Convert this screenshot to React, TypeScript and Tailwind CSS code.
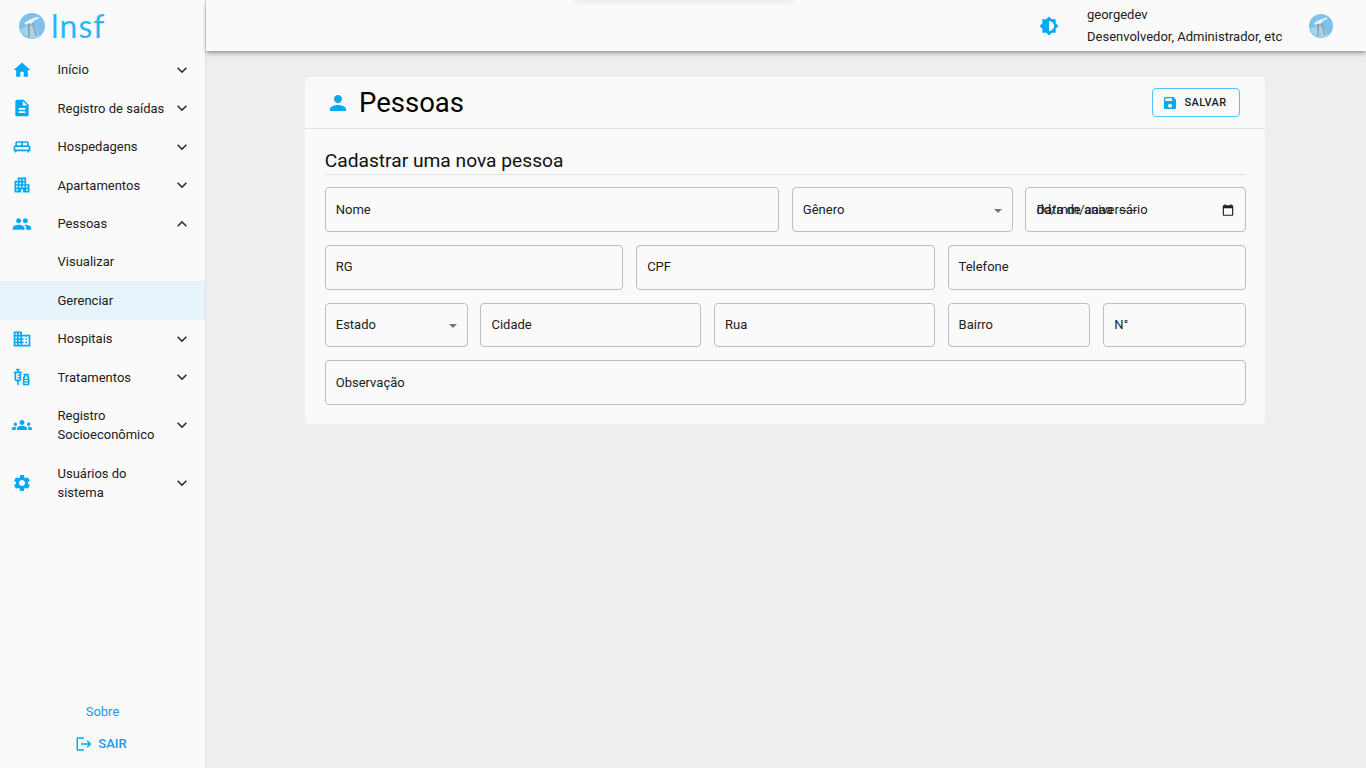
import { ReactNode } from "react";

const paths = {
  home: "M10 20v-6h4v6h5v-8h3L12 3 2 12h3v8z",
  doc: "M14 2H6c-1.1 0-1.99.9-1.99 2L4 20c0 1.1.89 2 1.99 2H18c1.1 0 2-.9 2-2V8l-6-6zm2 16H8v-2h8v2zm0-4H8v-2h8v2zm-3-5V3.5L18.5 9H13z",
  bed: "M22 12c0-1.1-.9-2-2-2V7c0-1.1-.9-2-2-2H6c-1.1 0-2 .9-2 2v3c-1.1 0-2 .9-2 2v5h1.33L4 19h1l.67-2h12.67l.66 2h1l.67-2H22v-5zm-4-2h-5V7h5v3zM6 7h5v3H6V7zm-2 5h16v3H4v-3z",
  apartment: "M17 11V3H7v4H3v14h8v-4h2v4h8V11h-4zM7 19H5v-2h2v2zm0-4H5v-2h2v2zm0-4H5V9h2v2zm4 4H9v-2h2v2zm0-4H9V9h2v2zm0-4H9V5h2v2zm4 8h-2v-2h2v2zm0-4h-2V9h2v2zm0-4h-2V5h2v2zm4 12h-2v-2h2v2zm0-4h-2v-2h2v2z",
  people: "M16 11c1.66 0 2.99-1.34 2.99-3S17.66 5 16 5c-1.66 0-3 1.34-3 3s1.34 3 3 3zm-8 0c1.66 0 2.99-1.34 2.99-3S9.66 5 8 5C6.34 5 5 6.34 5 8s1.34 3 3 3zm0 2c-2.33 0-7 1.17-7 3.5V19h14v-2.5c0-2.33-4.67-3.5-7-3.5zm8 0c-.29 0-.62.02-.97.05 1.16.84 1.97 1.97 1.97 3.45V19h6v-2.5c0-2.33-4.67-3.5-7-3.5z",
  domain: "M12 7V3H2v18h20V7H12zM6 19H4v-2h2v2zm0-4H4v-2h2v2zm0-4H4V9h2v2zm0-4H4V5h2v2zm4 12H8v-2h2v2zm0-4H8v-2h2v2zm0-4H8V9h2v2zm0-4H8V5h2v2zm10 12h-8v-2h2v-2h-2v-2h2v-2h-2V9h8v10zm-2-8h-2v2h2v-2zm0 4h-2v2h2v-2z",
  vaccines: "M11 5.5H8V4h.5c.55 0 1-.45 1-1s-.45-1-1-1h-3c-.55 0-1 .45-1 1s.45 1 1 1H6v1.5H3c-.55 0-1 .45-1 1s.45 1 1 1V15c0 1.1.9 2 2 2h1v4l2 1.5V17h1c1.1 0 2-.9 2-2V7.5c.55 0 1-.45 1-1s-.45-1-1-1zM9 9H7.25c-.41 0-.75.34-.75.75s.34.75.75.75H9V12H7.25c-.41 0-.75.34-.75.75s.34.75.75.75H9V15H5V7.5h4V9zm10.5 1.5V10c.55 0 1-.45 1-1s-.45-1-1-1h-5c-.55 0-1 .45-1 1s.45 1 1 1v.5c0 .5-1.5 1.16-1.5 3V20c0 1.1.9 2 2 2h4c1.1 0 2-.9 2-2v-6.5c0-1.84-1.5-2.5-1.5-3zm-3 0V10h1v.5c0 1.6 1.5 2 1.5 3v.5h-4v-.5c0-1 1.5-1.4 1.5-3zm2.5 5V17h-4v-1.5h4zM17 20h-2v-1.5h4V20h-2z",
  groups: "M12 12.75c1.63 0 3.07.39 4.24.9 1.08.48 1.76 1.56 1.76 2.73V18H6v-1.61c0-1.18.68-2.26 1.76-2.73 1.17-.52 2.61-.91 4.24-.91zM4 13c1.1 0 2-.9 2-2s-.9-2-2-2-2 .9-2 2 .9 2 2 2zm1.13 1.1c-.37-.06-.74-.1-1.13-.1-.99 0-1.93.21-2.78.58C.48 14.9 0 15.62 0 16.43V18h4.5v-1.61c0-.83.23-1.61.63-2.29zM20 13c1.1 0 2-.9 2-2s-.9-2-2-2-2 .9-2 2 .9 2 2 2zm4 3.43c0-.81-.48-1.53-1.22-1.85-.85-.37-1.79-.58-2.78-.58-.39 0-.76.04-1.13.1.4.68.63 1.46.63 2.29V18H24v-1.57zM12 6c1.66 0 3 1.34 3 3s-1.34 3-3 3-3-1.34-3-3 1.34-3 3-3z",
  settings: "M19.14 12.94c.04-.3.06-.61.06-.94 0-.32-.02-.64-.07-.94l2.03-1.58c.18-.14.23-.41.12-.61l-1.92-3.32c-.12-.22-.37-.29-.59-.22l-2.39.96c-.5-.38-1.03-.7-1.62-.94l-.36-2.54c-.04-.24-.24-.41-.48-.41h-3.84c-.24 0-.43.17-.47.41l-.36 2.54c-.59.24-1.13.57-1.62.94l-2.39-.96c-.22-.08-.47 0-.59.22L2.74 8.87c-.12.21-.08.47.12.61l2.03 1.58c-.05.3-.09.63-.09.94s.02.64.07.94l-2.03 1.58c-.18.14-.23.41-.12.61l1.92 3.32c.12.22.37.29.59.22l2.39-.96c.5.38 1.03.7 1.62.94l.36 2.54c.05.24.24.41.48.41h3.84c.24 0 .44-.17.47-.41l.36-2.54c.59-.24 1.13-.56 1.62-.94l2.39.96c.22.08.47 0 .59-.22l1.92-3.32c.12-.22.07-.47-.12-.61l-2.01-1.58zM12 15.6c-1.98 0-3.6-1.62-3.6-3.6s1.62-3.6 3.6-3.6 3.6 1.62 3.6 3.6-1.62 3.6-3.6 3.6z",
  brightness: "M20 15.31 23.31 12 20 8.69V4h-4.69L12 .69 8.69 4H4v4.69L.69 12 4 15.31V20h4.69L12 23.31 15.31 20H20v-4.69zM12 18V6c3.31 0 6 2.69 6 6s-2.69 6-6 6z",
  save: "M17 3H5c-1.11 0-2 .9-2 2v14c0 1.1.89 2 2 2h14c1.1 0 2-.9 2-2V7l-4-4zm-5 16c-1.66 0-3-1.34-3-3s1.34-3 3-3 3 1.34 3 3-1.34 3-3 3zm3-10H5V5h10v4z",
  person: "M12 12c2.21 0 4-1.79 4-4s-1.79-4-4-4-4 1.79-4 4 1.79 4 4 4zm0 2c-2.67 0-8 1.34-8 4v2h16v-2c0-2.66-5.33-4-8-4z",
  logout: "M17 7l-1.41 1.41L18.17 11H8v2h10.17l-2.58 2.58L17 17l5-5zM4 5h8V3H4c-1.1 0-2 .9-2 2v14c0 1.1.9 2 2 2h8v-2H4V5z",
  more: "M16.59 8.59 12 13.17 7.41 8.59 6 10l6 6 6-6z",
  less: "M12 8l-6 6 1.41 1.41L12 10.83l4.59 4.58L18 14z",
  calendar: "M19 4h-1V2h-2v2H8V2H6v2H5C3.9 4 3 4.9 3 6v14c0 1.1.9 2 2 2h14c1.1 0 2-.9 2-2V6c0-1.1-.9-2-2-2zm0 16H5V9h14v11z",
};

function Icon({ d, className }: { d: string; className: string }) {
  return (
    <svg viewBox="0 0 24 24" className={className} fill="currentColor" aria-hidden>
      <path d={d} />
    </svg>
  );
}

function Turbine({ size }: { size: number }) {
  return (
    <svg width={size} height={size} viewBox="0 0 24 24" aria-hidden className="shrink-0">
      <circle cx="12" cy="12" r="12" fill="#7fc1ea" />
      <path d="M1 15c3-1 6-3 9-3l5 1 4 9c-5 3-13 2-18-7z" fill="#a8d2ea" />
      <path d="M5 9.5C8 6.5 13 4.5 17.5 3.5l1 1.6C15 6 12 8 8.5 10.5 7 11 5.5 10.5 5 9.5z" fill="#eef2f4" />
      <path d="M8 10l.6 12.5h1.2L10 9.5zM13 7.5l3.6 13.3-1.2.6L11.6 8.4z" fill="#909ca4" />
      <path d="M10 9l3-2 .6 1-3 2z" fill="#ffffff" />
    </svg>
  );
}

type NavItem = { icon: string; label: ReactNode; open?: boolean };

const nav: NavItem[] = [
  { icon: paths.home, label: "Início" },
  { icon: paths.doc, label: "Registro de saídas" },
  { icon: paths.bed, label: "Hospedagens" },
  { icon: paths.apartment, label: "Apartamentos" },
  { icon: paths.people, label: "Pessoas", open: true },
];

const navAfter: NavItem[] = [
  { icon: paths.domain, label: "Hospitais" },
  { icon: paths.vaccines, label: "Tratamentos" },
  { icon: paths.groups, label: "Registro Socioeconômico" },
  { icon: paths.settings, label: "Usuários do sistema" },
];

function NavRow({ icon, label, open }: NavItem) {
  return (
    <div className="flex items-center pl-[12px] pr-[13px] py-[9.6px] text-[13px] leading-[19.2px] text-[#212121]">
      <Icon d={icon} className="-my-[1px] h-[20px] w-[20px] shrink-0 text-[#03a9f4]" />
      <span className="ml-[25.5px] w-[112px] shrink-0">{label}</span>
      <Icon d={open ? paths.less : paths.more} className="-my-[1px] ml-auto h-[20px] w-[20px] shrink-0 text-[#333333]" />
    </div>
  );
}

function SubRow({ label, active }: { label: string; active?: boolean }) {
  return (
    <div className={`py-[9.6px] pl-[57.5px] text-[13px] leading-[19.2px] text-[#212121] ${active ? "bg-[#e6f3fa]" : ""}`}>
      {label}
    </div>
  );
}

function Field({ label, span, arrow, children }: { label: string; span: string; arrow?: boolean; children?: ReactNode }) {
  return (
    <div className={`relative flex h-[44.67px] items-center rounded border border-[#bdbdbd] px-[10px] pb-[0.6px] text-[13px] text-[#212121] ${span}`}>
      <span>{label}</span>
      {arrow && (
        <span className="absolute right-[10px] top-1/2 h-0 w-0 -translate-y-[1px] border-x-[4.5px] border-t-[4px] border-x-transparent border-t-[#757575]" />
      )}
      {children}
    </div>
  );
}

export default function App() {
  return (
    <div className="flex h-[768px] w-full overflow-hidden bg-[#eeeeee] font-[Roboto,sans-serif]">
      <aside className="flex w-[206px] shrink-0 flex-col border-r border-[#e0e0e0] bg-[#fafafa]">
        <div className="flex h-[50.8px] shrink-0 items-center pl-[19px] pt-[1px]">
          <Turbine size={26} />
          <span className="ml-[6px] font-[Lato,sans-serif] text-[32px] font-normal leading-none tracking-[1px] text-[#29b6f6]">lnsf</span>
        </div>
        {nav.map((item, i) => (
          <NavRow key={i} {...item} />
        ))}
        <SubRow label="Visualizar" />
        <SubRow label="Gerenciar" active />
        {navAfter.map((item, i) => (
          <NavRow key={i} {...item} />
        ))}
        <div className="mt-auto flex flex-col items-center pb-[15px] text-[13px] text-[#2196f3]">
          <span className="leading-[19px]">Sobre</span>
          <div className="mr-[3px] mt-[13px] flex items-center gap-[5px] font-medium leading-[19px]">
            <Icon d={paths.logout} className="h-[18px] w-[18px] text-[#03a9f4]" />
            SAIR
          </div>
        </div>
      </aside>

      <div className="flex min-w-0 flex-1 flex-col">
        <header className="relative flex h-[51px] shrink-0 items-center bg-[#fafafa] shadow-[0_2px_4px_-1px_rgba(0,0,0,0.4),0_4px_5px_0_rgba(0,0,0,0.1)]">
          <div className="absolute -top-[6px] left-[368px] h-[6px] w-[220px] rounded shadow-[0_1px_6px_rgba(0,0,0,0.1)]" />
          <Icon d={paths.brightness} className="ml-[833px] h-[20px] w-[20px] text-[#03a9f4]" />
          <div className="ml-[28px] text-[13px] leading-[22px] text-[#212121]">
            <div>georgedev</div>
            <div>Desenvolvedor, Administrador, etc</div>
          </div>
          <div className="ml-[27px]">
            <Turbine size={24} />
          </div>
        </header>

        <main className="ml-[99px] mt-[26px] w-[960px] rounded bg-[#fafafa]">
          <div className="flex h-[52px] items-center border-b border-[#e0e0e0] pl-[21px] pr-[25px]">
            <Icon d={paths.person} className="h-[24px] w-[24px] text-[#03a9f4]" />
            <h1 className="ml-[9px] pt-[1px] text-[27.5px] font-normal leading-none text-black">Pessoas</h1>
            <button
              type="button"
              className="ml-auto flex h-[29px] w-[88px] items-center justify-center gap-[6px] rounded border border-[#4fc3f7] pr-[3px] pt-[1px] text-[11px] font-medium tracking-[0.4px] text-[#212121]"
            >
              <Icon d={paths.save} className="h-[16px] w-[16px] text-[#03a9f4]" />
              SALVAR
            </button>
          </div>
          <div className="pb-[19px] pl-[19.75px] pr-[18.85px] pt-[20px]">
            <h2 className="border-b border-[#e0e0e0] pb-[1px] text-[19.2px] font-normal leading-[24px] text-[#111111]">
              Cadastrar uma nova pessoa
            </h2>
            <div className="mt-[12.4px] grid grid-cols-12 gap-x-[12.8px] gap-y-[13px]">
              <Field label="Nome" span="col-span-6" />
              <Field label="Gênero" span="col-span-3" arrow />
              <Field label="Data de aniversário" span="col-span-3">
                <span className="absolute inset-y-0 left-[10px] flex items-center whitespace-pre pb-[0.6px]">dd/mm/aaaa  --:--</span>
                <Icon d={paths.calendar} className="absolute right-[10px] top-1/2 h-[14px] w-[14px] -translate-y-1/2 text-[#212121]" />
              </Field>
              <Field label="RG" span="col-span-4" />
              <Field label="CPF" span="col-span-4" />
              <Field label="Telefone" span="col-span-4" />
              <Field label="Estado" span="col-span-2" arrow />
              <Field label="Cidade" span="col-span-3" />
              <Field label="Rua" span="col-span-3" />
              <Field label="Bairro" span="col-span-2" />
              <Field label="N°" span="col-span-2" />
              <Field label="Observação" span="col-span-12" />
            </div>
          </div>
        </main>
      </div>
    </div>
  );
}
